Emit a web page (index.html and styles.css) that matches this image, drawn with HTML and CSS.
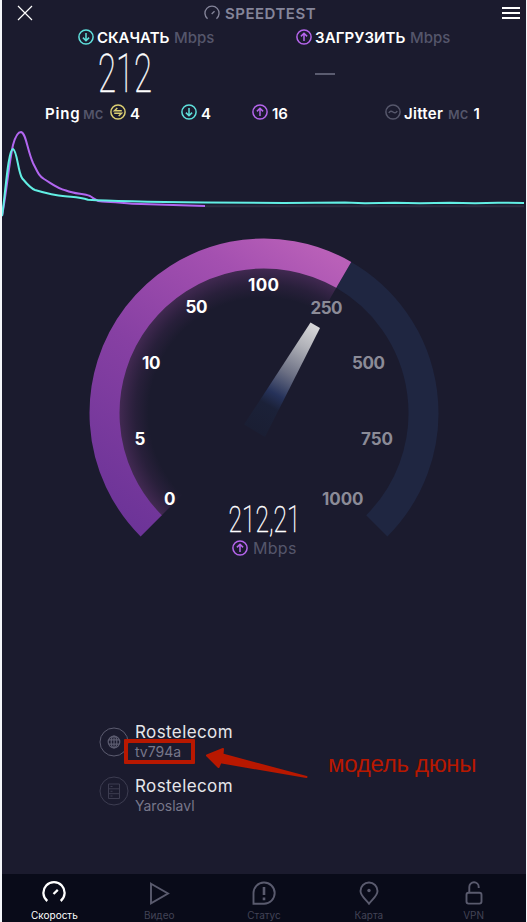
FILE: index.html
```
<!DOCTYPE html>
<html lang="ru" dir="ltr">

<head>
  <meta charset="utf-8">
  <title>Speedtest</title>
  <link rel="stylesheet" href="styles.css">
  <meta name="viewport" content="width=device-width, initial-scale=1.0">
</head>

<body>
  <!-- shared icons -->
  <svg class="defs" width="0" height="0">
    <symbol id="down" viewBox="0 0 16 16">
      <circle cx="8" cy="8" r="7.1" />
      <path d="M8 4v7.6M4.9 8.6L8 11.7l3.1-3.1" />
    </symbol>
    <symbol id="up" viewBox="0 0 16 16">
      <circle cx="8" cy="8" r="7.1" />
      <path d="M8 12V4.4M4.9 7.4L8 4.3l3.1 3.1" />
    </symbol>
    <symbol id="both" viewBox="0 0 16 16">
      <circle cx="8" cy="8" r="7.1" />
      <path d="M11.8 6.7H4.5L7.3 4M4.2 9.3h7.3L8.7 12" />
    </symbol>
    <symbol id="wave" viewBox="0 0 16 16">
      <circle cx="8" cy="8" r="7.1" />
      <path d="M3.8 9c1.2-2.2 2.6-2.2 4.2-1s3 1.2 4.2-1" />
    </symbol>
    <symbol id="gauge" viewBox="0 0 24 24">
      <path d="M5.3 20.500A10.600 10.600 0 1 1 18.700 20.500M11.500 13.500l4.300-4.100" />
    </symbol>
  </svg>

  <div class="app">
    <header>
      <svg class="close" viewBox="0 0 16 16"><path d="M1 1l14 14M15 1L1 15" /></svg>
      <h1><svg class="logo"><use href="#gauge" /></svg><span>SPEEDTEST</span></h1>
      <div class="menu"><i></i><i></i><i></i></div>
    </header>

    <div class="results">
      <div class="result">
        <p class="result_title"><svg class="icon cyan"><use href="#down" /></svg><b class="download">СКАЧАТЬ</b><span class="unit">Mbps</span></p>
        <svg class="result_value" width="60" height="46"><text x="2" y="41" textLength="54" lengthAdjust="spacingAndGlyphs">212</text></svg>
      </div>
      <div class="result upload">
        <p class="result_title"><svg class="icon purple"><use href="#up" /></svg><b>ЗАГРУЗИТЬ</b><span class="unit">Mbps</span></p>
        <div class="dash"></div>
      </div>
    </div>

    <div class="ping">
      <div class="ping_label"><b>Ping</b><span>мс</span></div>
      <div class="ping_item idle"><svg class="icon yellow"><use href="#both" /></svg><b>4</b></div>
      <div class="ping_item"><svg class="icon cyan"><use href="#down" /></svg><b>4</b></div>
      <div class="ping_item last"><svg class="icon purple"><use href="#up" /></svg><b>16</b></div>
      <div class="jitter"><svg class="icon grey"><use href="#wave" /></svg><b>Jitter</b><span>мс</span><b class="jitter_value">1</b></div>
    </div>

    <svg class="chart" viewBox="2 125 524 95">
      <path class="base" d="M205 206.300H524" />
      <path class="line_up" d="M2 216C6 196 9 163 13 145C16 134 19 132 21 132C26 133 27 149 33 163C38 173 39 176 44 179C51 183 56 188 66 190.500C75 194 83 193.500 90 196C95 199 96 201.500 102 201.500C118 202 127 204 141 204L205 206" />
      <path class="line_down" d="M2 216C5 198 8 149 13 149C17 150 18 172 22 178C27 184 30 188 35 190C45 193 55 195.500 65 196.200C75 197.200 80 197 88 199.800C115 201.500 150 202 205 202.600L284 203L345 202.600L365 203.200L395 202.700L420 203.200L450 202.700L475 203.200L498 202.700L524 203" />
    </svg>

    <div class="gauge_box">
      <svg class="gauge" viewBox="80 230 368 330">
        <defs>
          <linearGradient id="arc" gradientUnits="userSpaceOnUse" x1="150" y1="536" x2="340" y2="262">
            <stop offset="0" stop-color="#6d3498" />
            <stop offset=".45" stop-color="#8740a3" />
            <stop offset=".8" stop-color="#a450b0" />
            <stop offset="1" stop-color="#b960b8" />
          </linearGradient>
          <radialGradient id="glow" gradientUnits="userSpaceOnUse" cx="264" cy="413" r="146">
            <stop offset=".79" stop-color="#8f419a" stop-opacity="0" />
            <stop offset=".88" stop-color="#8f419a" stop-opacity=".11" />
            <stop offset="1" stop-color="#a04ca8" stop-opacity=".31" />
          </radialGradient>
          <linearGradient id="needle" gradientUnits="userSpaceOnUse" x1="315" y1="325" x2="254" y2="431">
            <stop offset="0" stop-color="#d8d8da" />
            <stop offset=".2" stop-color="#b0b1b8" />
            <stop offset=".45" stop-color="#6c7084" />
            <stop offset=".65" stop-color="#26325a" />
            <stop offset=".76" stop-color="#1b2138" />
            <stop offset="1" stop-color="#1a1e33" />
          </linearGradient>
        </defs>
        <path class="track" d="M343.750 274.870A159.500 159.500 0 0 1 376.780 525.780" />
        <path fill="url(#glow)" d="M264 413L161 516A145.700 145.700 0 0 1 336.850 286.800Z" />
        <path class="fill" d="M151.220 525.780A159.500 159.500 0 0 1 343.750 274.870" />
        <path fill="url(#needle)" d="M310.500 322.500L320 328L265 437L244 424.500Z" />
        <g class="marks">
          <text x="164" y="505" textLength="12">0</text>
          <text x="134.500" y="444.500" textLength="10.500">5</text>
          <text x="142" y="368.500" textLength="18.500">10</text>
          <text x="185.500" y="312.500" textLength="22">50</text>
          <text x="248" y="291" textLength="31">100</text>
        </g>
        <g class="marks off">
          <text x="310.500" y="313.500" textLength="32">250</text>
          <text x="352" y="369" textLength="33">500</text>
          <text x="361" y="444.500" textLength="32">750</text>
          <text x="322" y="505" textLength="41.500">1000</text>
        </g>
        <text class="speed" x="228.500" y="532" textLength="72" lengthAdjust="spacingAndGlyphs">212,21</text>
      </svg>
      <p class="gauge_unit"><svg class="icon purple"><use href="#up" /></svg><span>Mbps</span></p>
    </div>

    <div class="providers">
      <div class="provider">
        <svg class="round" viewBox="0 0 30 30">
          <circle cx="15" cy="15" r="14" />
          <g class="inner">
            <circle cx="15" cy="15" r="5.800" />
            <ellipse cx="15" cy="15" rx="2.800" ry="5.800" />
            <path d="M15 9v12M9.800 12.800h10.400M9.800 17.200h10.400" />
          </g>
        </svg>
        <div>
          <h2>Rostelecom</h2>
          <p class="model">tv794a</p>
        </div>
      </div>
      <div class="provider dim">
        <svg class="round" viewBox="0 0 30 30">
          <circle cx="15" cy="15" r="14" />
          <path d="M9.500 8h11v14.500h-11zM9.500 12.800h11M9.500 17.700h11M11.500 10.500h2M11.500 15.300h2M11.500 20h2" />
        </svg>
        <div>
          <h2>Rostelecom</h2>
          <p class="city">Yaroslavl</p>
        </div>
      </div>
      <!-- note over the provider block -->
      <div class="note_box"></div>
      <svg class="note_arrow" viewBox="205 745 104 36">
        <path d="M207 755.500L223 749L222.500 754.500L306.500 777L220.500 762.300L218.500 767Z" />
      </svg>
      <p class="note_text">модель дюны</p>
    </div>

    <nav>
      <a class="active">
        <svg viewBox="0 0 24 24"><use href="#gauge" /></svg>
        <span>Скорость</span>
      </a>
      <a>
        <svg viewBox="0 0 24 24"><path d="M4 3.200L21 13L4 22.800z" /></svg>
        <span>Видео</span>
      </a>
      <a>
        <svg viewBox="0 0 24 24"><path d="M1.500 23.200V13A10.600 10.600 0 1 1 12 23.200z" /><path class="bold" d="M12 6.500v8M12 17v2.700" /></svg>
        <span>Статус</span>
      </a>
      <a>
        <svg viewBox="0 0 24 24"><path d="M12 23.200C9.500 19.500 3.500 15.500 3.500 10.500a8.500 8.500 0 0 1 17 0C20.500 15.500 14.500 19.500 12 23.200z" /><circle class="dot" cx="12" cy="10" r="1.700" /></svg>
        <span>Карта</span>
      </a>
      <a>
        <svg viewBox="0 0 24 24"><rect x="4.500" y="12.300" width="15" height="10.800" rx="2" /><path d="M7.300 12.300V6.500a4.700 4.700 0 0 1 9.400 0v1" /></svg>
        <span>VPN</span>
      </a>
    </nav>
  </div>
</body>

</html>
```

FILE: styles.css
```
* {
  margin: 0;
  padding: 0;
  box-sizing: border-box;
}

body {
  width: 527px;
  height: 922px;
  padding: 0 1px 0 2px;
  background: #f4f6fa;
  font-family: Inter, "Open Sans", sans-serif;
  color: #fff;
  overflow: hidden;
}

.defs {
  display: block;
}

.app {
  display: flex;
  flex-direction: column;
  height: 922px;
  background: #1b1b2e;
}

svg {
  display: block;
  fill: none;
  stroke: currentColor;
  flex-shrink: 0;
}

svg text {
  stroke: none;
  fill: #fff;
}

header {
  display: flex;
  align-items: center;
  height: 26px;
  padding: 0 6px 0 15px;
}

.close {
  width: 16px;
  height: 16px;
  stroke-width: 1.2;
}

h1 {
  display: flex;
  align-items: center;
  margin-left: 171px;
  font-size: 15px;
  font-weight: 600;
  color: #85859a;
}

h1 span {
  letter-spacing: 0.5px;
}

.logo {
  width: 16px;
  height: 16px;
  margin-right: 5px;
  stroke-width: 2;
}

.menu {
  display: flex;
  flex-direction: column;
  gap: 3px;
  width: 18px;
  margin-left: auto;
}

.menu i {
  height: 2px;
  background: #fff;
}

.results {
  display: flex;
  height: 74px;
  padding-left: 76px;
}

.result {
  width: 217px;
}

.result.upload {
  padding-left: 1px;
}

.result_title {
  display: flex;
  align-items: center;
  height: 22px;
  font-size: 15px;
}

.result_title b {
  width: 91px;
  margin-left: 3px;
  font-weight: 600;
  letter-spacing: 0.1px;
}

.result_title .download {
  width: 73px;
  letter-spacing: 0;
}

.icon {
  width: 16px;
  height: 16px;
  stroke-width: 1.5;
}

.cyan {
  color: #5fe0dc;
}

.purple {
  color: #b565ec;
}

.yellow {
  color: #dccf72;
}

.grey {
  color: #56576b;
}

.unit {
  margin-left: 4px;
  font-weight: 500;
  color: #55566b;
}

.result_value {
  margin: 3px 0 0 18px;
  overflow: visible;
}

.result_value text,
.speed {
  font-family: Roboto, sans-serif;
  font-weight: 100;
  stroke: #fff;
  stroke-width: 0.5;
}

.result_value text {
  font-size: 53px;
}

.dash {
  width: 20px;
  height: 2px;
  margin: 25px 0 0 19px;
  background: #5b5c70;
}

.ping {
  display: flex;
  align-items: center;
  height: 27px;
  padding-left: 43px;
  font-size: 15px;
}

.ping b {
  font-weight: 600;
}

.ping_label {
  display: flex;
  width: 65px;
}

.ping_label b {
  width: 38px;
  letter-spacing: 0.8px;
}

.ping span {
  font-weight: 500;
  color: #55566b;
}

.ping_item {
  display: flex;
  width: 71px;
}

.ping_item b {
  margin-left: 4px;
}

.ping_item.last {
  width: 133px;
}

.jitter {
  display: flex;
}

.jitter b {
  width: 40px;
  margin-left: 3px;
  letter-spacing: 0.3px;
}

.jitter span {
  margin-left: 4px;
}

.jitter .jitter_value {
  width: auto;
  margin-left: 5px;
}

.chart {
  width: 524px;
  height: 95px;
  margin-top: -2px;
  stroke-width: 2;
}

.base {
  stroke: #2d2d40;
}

.line_up {
  stroke: #b266f0;
}

.line_down {
  stroke: #62efe4;
}

.gauge_box {
  height: 484px;
  padding: 10px 0 0 78px;
}

.gauge {
  width: 368px;
  height: 330px;
  margin-bottom: -22px;
}

.gauge path {
  stroke: none;
}

.gauge .track,
.gauge .fill {
  stroke: #1f2641;
  stroke-width: 30;
}

.gauge .fill {
  stroke: url(#arc);
}

.marks text {
  font-size: 17px;
  font-weight: 700;
}

.marks.off text {
  fill: #8b8b97;
}

.speed {
  font-size: 36px;
}

.gauge_unit {
  display: flex;
  align-items: center;
  padding-left: 152px;
  height: 20px;
  font-size: 16px;
  color: #55566b;
}

.gauge_unit span {
  margin-left: 5px;
  letter-spacing: 0.3px;
}

.providers {
  position: relative;
  height: 170px;
  padding: 17px 0 0 97px;
}

.provider {
  display: flex;
  height: 54px;
}

.round {
  width: 30px;
  height: 30px;
  margin: 6px 6px 0 0;
  color: #5c5c70;
}

.inner {
  stroke-width: 1.2;
}

.dim .round {
  margin-top: 1px;
  color: #3d3d51;
}

h2 {
  font-size: 17px;
  font-weight: 400;
  line-height: 22px;
  letter-spacing: 0.4px;
  color: #e6e6ea;
}

.model,
.city {
  font-size: 14px;
  line-height: 17px;
  color: #77778a;
}

.note_box {
  position: absolute;
  left: 122px;
  top: 35px;
  width: 71px;
  height: 25px;
  border: 4px solid #b81800;
  border-radius: 1px;
}

.note_arrow {
  position: absolute;
  left: 203px;
  top: 41px;
  width: 104px;
  height: 36px;
  color: #b81800;
  fill: #b81800;
  stroke-width: 2;
  stroke-linejoin: round;
  stroke-linecap: round;
}

.note_text {
  position: absolute;
  left: 326px;
  top: 46px;
  font-family: "Liberation Sans", sans-serif;
  font-size: 24px;
  letter-spacing: -0.3px;
  color: #b81800;
  white-space: nowrap;
}

nav {
  display: flex;
  height: 48px;
  background: #090b19;
}

nav a {
  display: flex;
  flex: 1;
  flex-direction: column;
  align-items: center;
  padding-top: 6px;
  font-size: 10px;
  line-height: 12px;
  color: #424356;
}

nav svg {
  width: 24px;
  height: 25px;
  margin-bottom: 4px;
  color: #5a5b6e;
  stroke-width: 1.9;
}

nav .bold {
  stroke-width: 2.6;
}

nav .dot {
  fill: #5a5b6e;
  stroke: none;
}

nav .active,
nav .active svg {
  color: #fff;
}

nav .active svg {
  stroke-width: 2.3;
}
```
